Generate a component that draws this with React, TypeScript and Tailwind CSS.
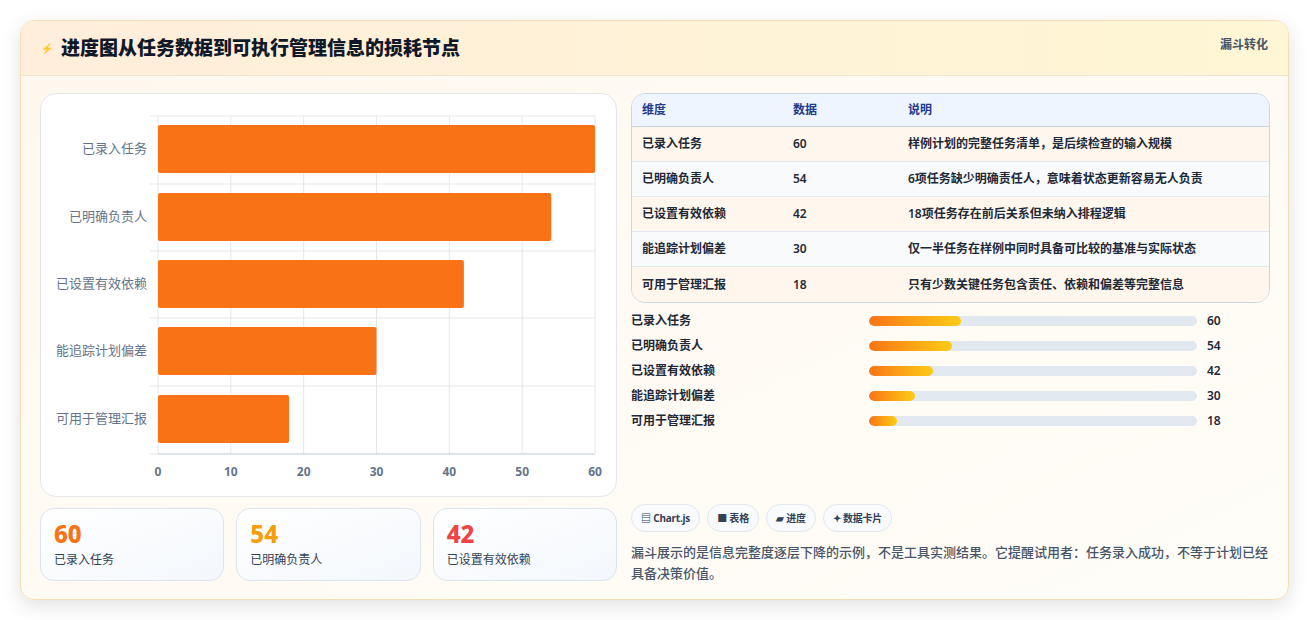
import React from "react";

const data = [
  { l: "已录入任务", v: 60, d: "样例计划的完整任务清单，是后续检查的输入规模" },
  { l: "已明确负责人", v: 54, d: "6项任务缺少明确责任人，意味着状态更新容易无人负责" },
  { l: "已设置有效依赖", v: 42, d: "18项任务存在前后关系但未纳入排程逻辑" },
  { l: "能追踪计划偏差", v: 30, d: "仅一半任务在样例中同时具备可比较的基准与实际状态" },
  { l: "可用于管理汇报", v: 18, d: "只有少数关键任务包含责任、依赖和偏差等完整信息" },
];

function Chart() {
  const x0 = 117, w = 437, rows = [22, 90, 157, 224, 292, 360];
  return (
    <svg width="577" height="403" className="block">
      {[0, 1, 2, 3, 4, 5, 6].map((i) => (
        <line key={i} x1={x0 + (w * i) / 6} x2={x0 + (w * i) / 6} y1={22} y2={360} stroke="#e5e7eb" />
      ))}
      {rows.map((y, i) => (
        <line key={i} x1={x0 - 8} x2={x0 + w} y1={y} y2={y} stroke="#e5e7eb" />
      ))}
      <line x1={x0} x2={x0 + w} y1={360} y2={360} stroke="#cbd5e1" />
      {data.map((r, i) => {
        const top = rows[i] + 9;
        return (
          <g key={i}>
            <rect x={x0} y={top} width={(w * r.v) / 60} height={48} fill="#f97316" rx={2} />
            <text x={106} y={top + 28} textAnchor="end" fontSize="13" fill="#64748b">{r.l}</text>
          </g>
        );
      })}
      {[0, 10, 20, 30, 40, 50, 60].map((t, i) => (
        <text key={t} x={x0 + (w * i) / 6} y={382} textAnchor="middle" fontSize="12" fontWeight="700" fill="#64748b">{t}</text>
      ))}
    </svg>
  );
}

export default function App() {
  return (
    <div className="w-[1309px] h-[620px] bg-white pt-[20px] pl-[20px]" style={{ fontFamily: '"Noto Sans", "Noto Sans CJK SC", sans-serif' }}>
      <div className="w-[1269px] h-[580px] rounded-[14px] border border-[#f5dfb8] bg-gradient-to-br from-[#fff8ef] to-[#fffdf8] shadow-[0_6px_20px_rgba(0,0,0,0.12)] overflow-hidden">
        <div className="h-[55px] flex items-center justify-between px-[20px] bg-gradient-to-r from-[#ffeedb] to-[#fef6d4] border-b border-[#f3e6d0]">
          <div className="flex items-center gap-[8px]">
            <span className="text-[#3b5bdb] text-[10px]">⚡</span>
            <span className="text-[19px] font-black text-[#111827]">进度图从任务数据到可执行管理信息的损耗节点</span>
          </div>
          <span className="text-[12px] font-bold text-[#475569] self-start mt-[15px]">漏斗转化</span>
        </div>
        <div className="flex gap-[14px] px-[19px] pt-[17px]">
          <div className="w-[577px] flex flex-col gap-[11px]">
            <div className="h-[404px] bg-white rounded-[16px] border border-[#e5e7eb]">
              <Chart />
            </div>
            <div className="grid grid-cols-3 gap-[12px]">
              {[["60", "text-[#f97316]"], ["54", "text-[#f59e0b]"], ["42", "text-[#ef4444]"]].map(([n, c], i) => (
                <div key={n} className="h-[73px] rounded-[14px] border border-[#dbe4ef] bg-gradient-to-br from-white to-[#f3f7fc] px-[13px] pt-[10px]">
                  <div className={`text-[24px] font-extrabold leading-[30px] ${c}`}>{n}</div>
                  <div className="text-[12px] text-[#334155] mt-[2px]">{data[i].l}</div>
                </div>
              ))}
            </div>
          </div>
          <div className="w-[639px] flex flex-col">
            <div className="rounded-[14px] border border-[#cbd5e1] overflow-hidden text-[12px] font-semibold text-[#1f2937]">
              <div className="h-[33px] flex items-center bg-[#eef5ff] text-[#1e3a8a] border-b border-[#cbd5e1]">
                <span className="w-[161px] pl-[10px]">维度</span>
                <span className="w-[115px]">数据</span>
                <span>说明</span>
              </div>
              {data.map((r, i) => (
                <div key={i} className={`h-[35px] flex items-center ${i % 2 ? "bg-[#f8fafc]" : "bg-[#fff7ee]"} ${i < 4 ? "border-b border-[#e2e8f0]" : ""}`}>
                  <span className="w-[161px] pl-[10px]">{r.l}</span>
                  <span className="w-[115px]">{r.v}</span>
                  <span>{r.d}</span>
                </div>
              ))}
            </div>
            <div className="flex flex-col gap-[8px] mt-[9px]">
              {data.map((r, i) => (
                <div key={i} className="flex items-center h-[17px] text-[12px] font-semibold text-[#1f2937]">
                  <span className="w-[238px]">{r.l}</span>
                  <div className="w-[328px] h-[10px] rounded-full bg-[#e2e8f0] overflow-hidden">
                    <div className="h-full rounded-full bg-gradient-to-r from-[#f97316] to-[#facc15]" style={{ width: `${(r.v / 60) * 28}%` }} />
                  </div>
                  <span className="ml-[10px]">{r.v}</span>
                </div>
              ))}
            </div>
            <div className="flex gap-[7px] mt-[75px]">
              {["▤ Chart.js", "■ 表格", "▰ 进度", "✦ 数据卡片"].map((t) => (
                <span key={t} className="h-[28px] px-[9px] flex items-center rounded-full border border-[#e2e8f0] bg-[#f8fafc] text-[10px] font-bold text-[#334155] tracking-[-0.2px]">{t}</span>
              ))}
            </div>
            <p className="mt-[10px] text-[13px] font-medium leading-[21px] text-[#475569] w-[645px]">
              漏斗展示的是信息完整度逐层下降的示例，不是工具实测结果。它提醒试用者：任务录入成功，不等于计划已经具备决策价值。
            </p>
          </div>
        </div>
      </div>
    </div>
  );
}
